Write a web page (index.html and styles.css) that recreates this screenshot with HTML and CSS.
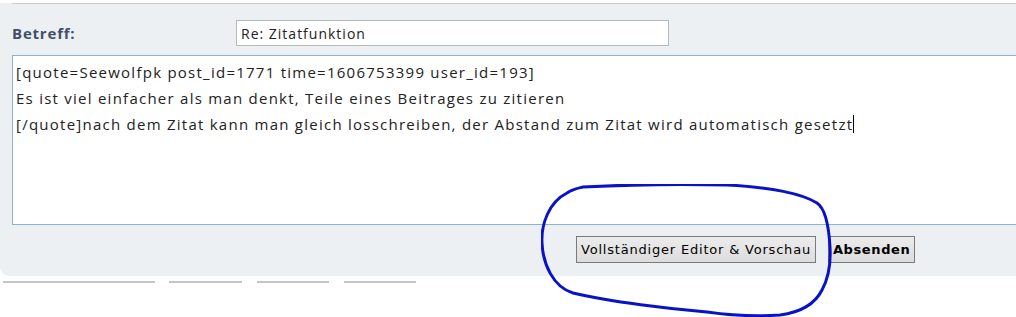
FILE: index.html
```html
<!DOCTYPE html>
<html lang="de">
  <head>
    <meta charset="UTF-8" />
    <title>Antworten</title>
    <link rel="stylesheet" href="styles.css">
  </head>
  <body>
    <div class="panel">
      <div class="subject-row">
        <label class="subject-label" for="subject">Betreff:</label>
        <input class="subject-input" type="text" id="subject" value="Re: Zitatfunktion" />
      </div>
      <div class="message">[quote=Seewolfpk post_id=1771 time=1606753399 user_id=193]
Es ist viel einfacher als man denkt, Teile eines Beitrages zu zitieren
[/quote]nach dem Zitat kann man gleich losschreiben, der Abstand zum Zitat wird automatisch gesetzt<span class="caret"></span></div>
      <div class="actions">
        <button class="btn">Vollständiger Editor &amp; Vorschau</button>
        <button class="btn btn-main">Absenden</button>
      </div>
    </div>
    <div class="tabs">
      <span class="tab tab-1"></span>
      <span class="tab tab-2"></span>
      <span class="tab tab-3"></span>
      <span class="tab tab-4"></span>
    </div>

    <svg class="circle" width="300" height="140" viewBox="0 0 300 140">
      <path d="M42 3 C100 0 150 0 186 1 C230 3 262 10 276 19 C285 25 288 45 289 63 C290 80 287 95 281 106 C275 118 262 128 239 131 C210 133 180 130 166 128 C130 125 70 118 32 109 C12 103 2 80 1 59 C0 40 8 18 26 9 C32 5 38 4 42 3 Z"
        fill="none" stroke="#0a12c8" stroke-width="3" stroke-linejoin="round" />
    </svg>
  </body>
</html>
```

FILE: styles.css
```css
body {
  margin: 0;
  background: #fff;
  font-family: "Open Sans", sans-serif;
  position: relative;
  width: 1016px;
  height: 317px;
  overflow: hidden;
}
.panel {
  background: #ecf0f3;
  border-bottom-left-radius: 9px;
  padding: 0 0 14px 12px;
  height: 259px;
}
.subject-row {
  border-top: 1px solid #c6ccd1;
  margin-top: 3px;
  display: flex;
  align-items: center;
  padding: 16px 0 9px;
}
.subject-label {
  width: 224px;
  font-family: "Open Sans", sans-serif;
  font-weight: bold;
  font-size: 15px;
  letter-spacing: 0.8px;
  color: #425067;
}
.subject-input {
  width: 433px;
  height: 26px;
  box-sizing: border-box;
  border: 1px solid #b4b9bd;
  padding: 0 4px;
  font-family: "Open Sans", sans-serif;
  font-size: 14px;
  letter-spacing: 1px;
  color: #222;
  background: #fff;
}
.message {
  box-sizing: border-box;
  height: 170px;
  margin-right: -4px;
  background: #fff;
  border: 1px solid #8fb3cc;
  padding: 3px 3px;
  font-size: 15px;
  letter-spacing: 1.25px;
  line-height: 26px;
  color: #222;
  white-space: pre-wrap;
}
.caret {
  display: inline-block;
  width: 1px;
  height: 18px;
  background: #000;
  vertical-align: -3px;
}
.actions {
  display: flex;
  gap: 12px;
  padding: 11px 0 0 564px;
}
.btn {
  font-family: "DejaVu Sans", Verdana, sans-serif;
  font-size: 13px;
  letter-spacing: 0.8px;
  color: #000;
  height: 27px;
  padding: 0 4px;
  background: linear-gradient(#ececec, #dcdcdc);
  border: 1px solid #7a7a7a;
}
.btn-main {
  font-weight: bold;
  letter-spacing: 0.6px;
}
.tabs {
  display: flex;
  padding: 5px 0 0 3px;
}
.tab {
  height: 2px;
  background: #c4c4c4;
  margin-right: 14px;
}
.tab-1 { width: 152px; }
.tab-2 { width: 73px; margin-right: 15px; }
.tab-3 { width: 72px; margin-right: 15px; }
.tab-4 { width: 72px; }
.circle {
  position: absolute;
  left: 541px;
  top: 184px;
}
```
